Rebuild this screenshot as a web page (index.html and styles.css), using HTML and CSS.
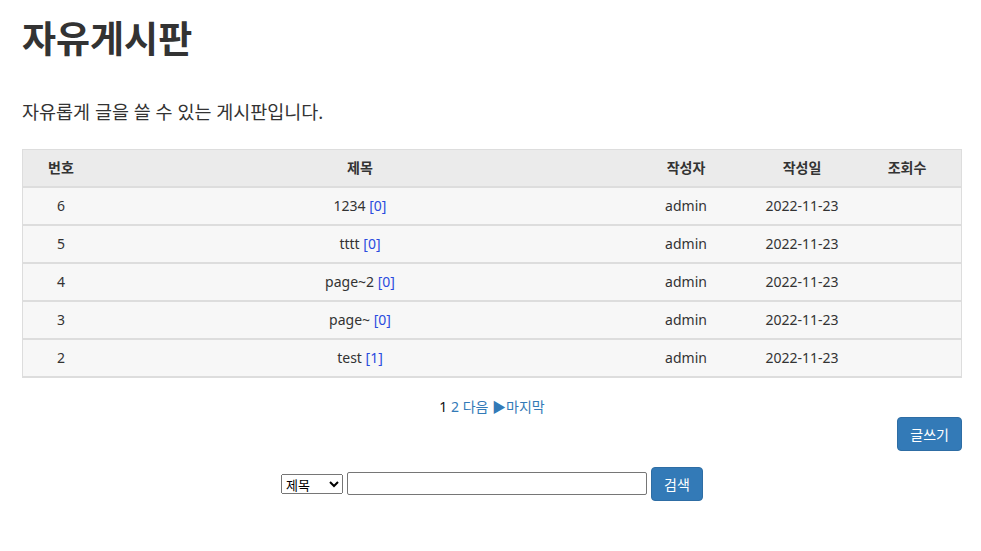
FILE: index.html
```html
<!doctype html>
<html lang="ko">

<head>
    <meta charset="utf-8" />
    <link rel="icon" href="data:,">
    <meta name="viewport" content="width=device-width, initial-scale=1">
    <link rel="stylesheet" href="styles.css">
</head>

<body>
    <div class="container">
        <h1 class="title">자유게시판</h1>
        <p class="lead">자유롭게 글을 쓸 수 있는 게시판입니다.</p>

        <table class="board">
            <thead>
                <tr>
                    <th class="col-no">번호</th>
                    <th class="col-subject">제목</th>
                    <th class="col-writer">작성자</th>
                    <th class="col-date">작성일</th>
                    <th class="col-hit">조회수</th>
                </tr>
            </thead>
            <tbody>
                <tr>
                    <td>6</td>
                    <td>1234 <a href="#">[0]</a></td>
                    <td>admin</td>
                    <td>2022-11-23</td>
                    <td></td>
                </tr>
                <tr>
                    <td>5</td>
                    <td>tttt <a href="#">[0]</a></td>
                    <td>admin</td>
                    <td>2022-11-23</td>
                    <td></td>
                </tr>
                <tr>
                    <td>4</td>
                    <td>page~2 <a href="#">[0]</a></td>
                    <td>admin</td>
                    <td>2022-11-23</td>
                    <td></td>
                </tr>
                <tr>
                    <td>3</td>
                    <td>page~ <a href="#">[0]</a></td>
                    <td>admin</td>
                    <td>2022-11-23</td>
                    <td></td>
                </tr>
                <tr>
                    <td>2</td>
                    <td>test <a href="#">[1]</a></td>
                    <td>admin</td>
                    <td>2022-11-23</td>
                    <td></td>
                </tr>
            </tbody>
        </table>

        <div class="paging">
            <b>1</b>
            <a href="#">2</a>
            <a href="#">다음 ▶</a><a href="#">마지막</a>
        </div>

        <div class="actions">
            <button class="btn">글쓰기</button>
        </div>

        <form class="search">
            <select>
                <option>제목</option>
                <option>내용</option>
                <option>작성자</option>
            </select>
            <input type="text" />
            <button type="button" class="btn">검색</button>
        </form>
    </div>
</body>

</html>
```

FILE: styles.css
```css
html {
    font-family: "Noto Sans", "Noto Sans CJK KR", sans-serif;
    font-size: 14px;
    line-height: 1.4;
    color: #333;
}

body {
    margin: 0;
}

a {
    color: #337ab7;
    text-decoration: none;
}

.container {
    width: 940px;
    padding: 0 22px;
}

.title {
    font-size: 37px;
    font-weight: bold;
    margin: 13px 0 0;
    line-height: 1.4;
}

.lead {
    font-size: 18.5px;
    margin: 34px 0 24px;
}

.board {
    width: 100%;
    border-collapse: collapse;
    border: 1px solid #ddd;
}

.board th,
.board td {
    text-align: center;
    height: 36px;
    padding: 0;
}

.board th {
    background: #ebebeb;
    font-weight: bold;
    border-bottom: 2px solid #ddd;
}

.board td {
    background: #f7f7f7;
    border-bottom: 2px solid #ddd;
}

.board td a {
    color: #2a4bde;
}

.col-no {
    width: 76px;
}

.col-writer {
    width: 130px;
}

.col-date {
    width: 102px;
}

.col-hit {
    width: 108px;
}

.paging {
    text-align: center;
    margin-top: 18px;
    line-height: 21px;
}

.paging b {
    font-weight: normal;
    color: #111;
}

.actions {
    display: flex;
    justify-content: flex-end;
}

.btn {
    font-family: inherit;
    font-size: 14px;
    color: #fff;
    background: #337ab7;
    border: 1px solid #2e6da4;
    border-radius: 4px;
    padding: 0 12px;
    height: 34px;
}

.search {
    display: flex;
    justify-content: center;
    align-items: center;
    gap: 4px;
    margin-top: 16px;
}

.search select {
    width: 62px;
    height: 20px;
    font-family: inherit;
    font-size: 13px;
}

.search input {
    width: 294px;
    height: 19px;
    border: 1px solid #767676;
    border-radius: 2px;
}
```
